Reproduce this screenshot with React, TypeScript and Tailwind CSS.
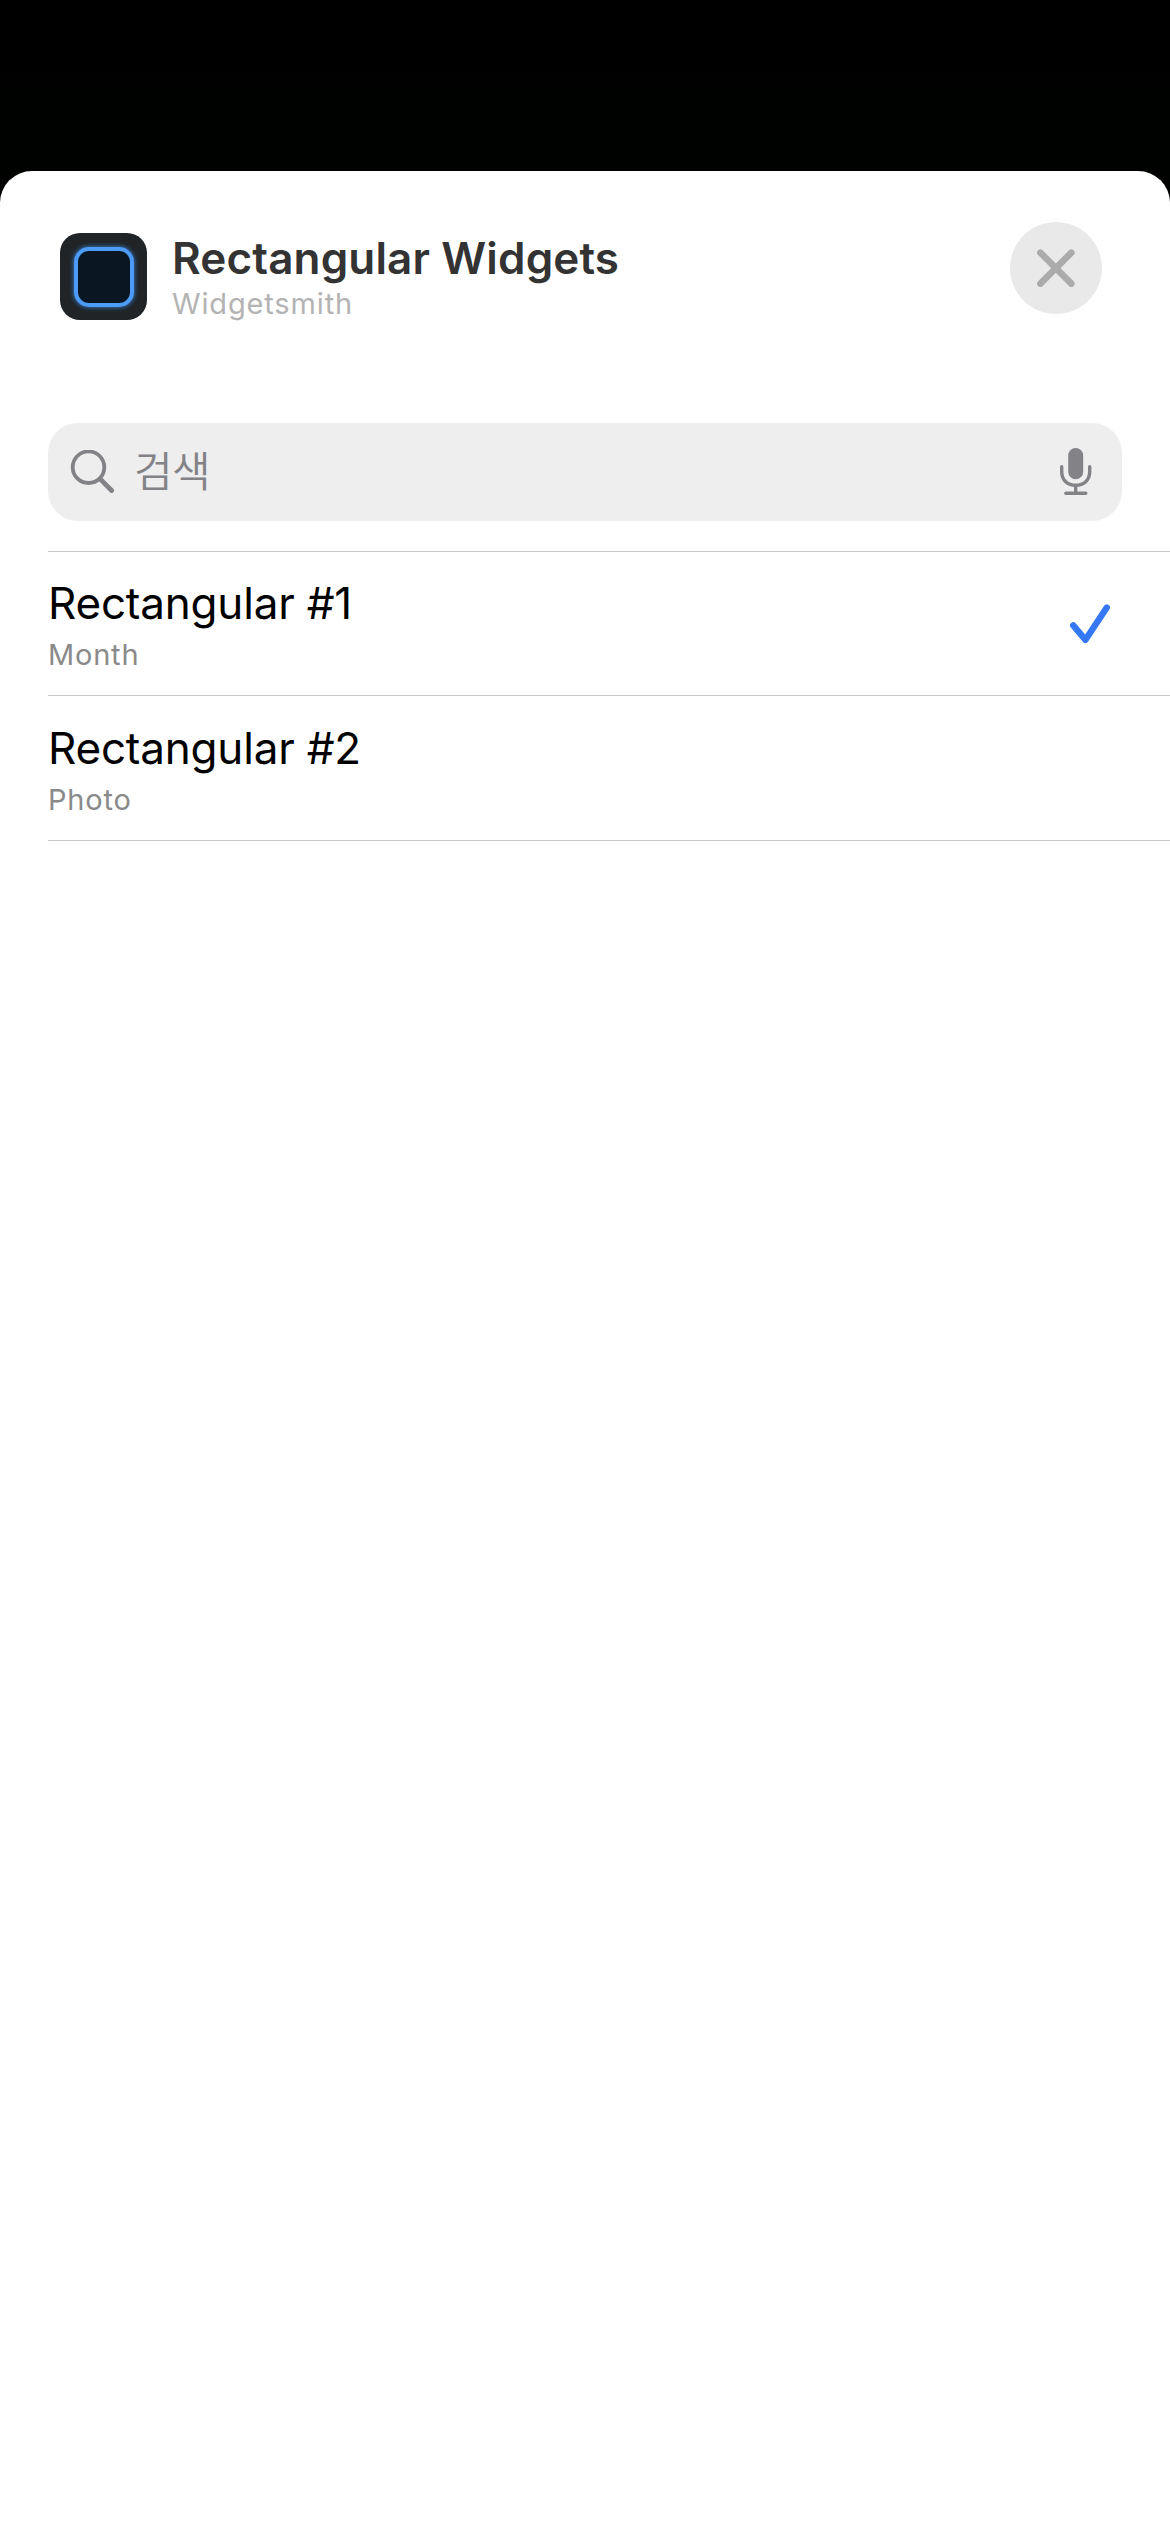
import type {FunctionComponent} from 'react'

const widgets = [
  {title: 'Rectangular #1', subtitle: 'Month', selected: true},
  {title: 'Rectangular #2', subtitle: 'Photo', selected: false}
]

const AppIcon: FunctionComponent = () => (
  <div className="flex h-[87px] w-[87px] shrink-0 items-center justify-center rounded-[20px] bg-[#202427]">
    <div className="h-[60px] w-[60px] rounded-[15px] border-4 border-[#4c9bf5] bg-[#0a1722] shadow-[0_0_5px_#3f8ae0]" />
  </div>
)

const CloseIcon: FunctionComponent = () => (
  <svg width="92" height="92" viewBox="0 0 92 92" fill="none" stroke="#ababab" strokeWidth="6.6" strokeLinecap="round">
    <path d="M30.4 30.7 61.3 61.6M61.3 30.7 30.4 61.6" />
  </svg>
)

const SearchIcon: FunctionComponent = () => (
  <svg width="44" height="44" viewBox="0 0 44 44" fill="none" stroke="#838387" strokeLinecap="round">
    <circle cx="18.5" cy="17.2" r="15.8" strokeWidth="3.8" />
    <path d="M30.3 29.1 41.6 40.5" strokeWidth="4.8" />
  </svg>
)

const MicIcon: FunctionComponent = () => (
  <svg width="32" height="48" viewBox="0 0 32 48" fill="none" stroke="#838387" strokeWidth="3.4" strokeLinecap="round">
    <rect x="8.2" y="0" width="15" height="31.2" rx="7.5" fill="#838387" stroke="none" />
    <path d="M1.7 18.6v5.2c0 8.4 6 13.5 14 13.5s14-5.1 14-13.5v-5.2M15.7 37.6v7.8M5.8 45.3h20" />
  </svg>
)

const CheckIcon: FunctionComponent = () => (
  <svg width="40" height="40" viewBox="0 0 40 40" fill="none" stroke="#3478f6" strokeWidth="6.4" strokeLinecap="round" strokeLinejoin="round">
    <path d="M3.2 21.4 15.5 35.8 36.8 3.6" />
  </svg>
)

const App: FunctionComponent = () => (
  <div className="flex h-[2532px] w-[1170px] flex-col bg-linear-to-b from-black to-[#000200] to-[100px] pt-[171px] font-['Inter','Noto_Sans_CJK_KR',sans-serif]">
    <main className="flex-1 rounded-t-[32px] bg-white">
      <header className="flex h-[252px] items-start pt-[51px] pr-[68px] pl-[60px]">
        <div className="flex flex-1 items-start pt-[9px]">
          <div className="pt-0.5">
            <AppIcon />
          </div>
          <div className="ml-[25px]">
            <h1 className="text-[44px] leading-[54px] font-semibold tracking-[0.15px] text-[#333333]">
              Rectangular Widgets
            </h1>
            <p className="text-[29px] leading-[37px] tracking-[0.85px] text-[#b3b3b3]">Widgetsmith</p>
          </div>
        </div>
        <button className="h-[92px] w-[92px] rounded-full bg-[#e9e9e9]" aria-label="Close">
          <CloseIcon />
        </button>
      </header>

      <div className="mx-12 flex h-[98px] items-center rounded-[30px] bg-[#eeeeee] pr-[30px] pl-[22px] text-[#838387]">
        <SearchIcon />
        <span className="ml-[20px] flex-1 text-[42px] leading-[60px] font-[350] tracking-[-0.6px]">검색</span>
        <MicIcon />
      </div>

      <ul className="mt-[30px] ml-12 border-t border-[#c6c6c6]">
        {widgets.map(({title, subtitle, selected}) => (
          <li
            className="flex h-[144px] items-start justify-between border-b border-[#c6c6c6] pt-6 pr-[60px] last:h-[145px] last:pt-[25px]"
            key={title}>
            <div>
              <h2 className="text-[44px] leading-[54px] tracking-[-0.2px] text-black">{title}</h2>
              <p className="mt-1.5 text-[29px] leading-[37px] tracking-[0.8px] text-[#8a8a8a]">{subtitle}</p>
            </div>
            {selected && (
              <div className="pt-7">
                <CheckIcon />
              </div>
            )}
          </li>
        ))}
      </ul>
    </main>
  </div>
)

export default App
